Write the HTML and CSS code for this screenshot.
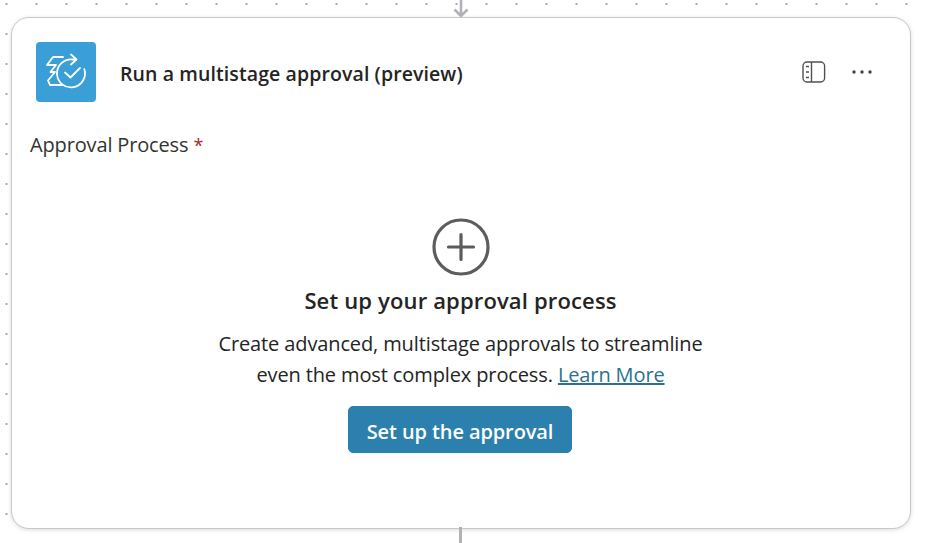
FILE: index.html
```html
<!DOCTYPE html>
<html lang="en">
<head>
<meta charset="utf-8">
<title>Run a multistage approval</title>
<link rel="stylesheet" href="styles.css">
</head>
<body>
<svg class="conn conn-top" width="20" height="18" viewBox="0 0 20 18"><path d="M10 0V15.5M3.5 9.5L10 16L16.5 9.5" fill="none" stroke="#b3b0b6" stroke-width="2.6"/></svg>
<main class="card">
  <header class="head">
    <div class="logo">
      <svg width="60" height="60" viewBox="0 0 60 60" fill="none" stroke="#fff" stroke-width="1.8" stroke-linecap="round" stroke-linejoin="round">
        <path d="M40 17.5H36.5A14 14 0 1 0 48.3 27"/>
        <path d="M29 30.5L34.5 35.5L44 26" />
        <path d="M35 12.5L40.5 17.5L35 22.5"/>
        <path d="M27 15H17L11 23H20L14.5 30H19L12 38.5L14 43H26"/>
      </svg>
    </div>
    <h1 class="title">Run a multistage approval (preview)</h1>
    <div class="tools">
      <svg class="ico-panel" width="24" height="22" viewBox="0 0 24 22" fill="none" stroke="#505050" stroke-width="1.4"><rect x="1" y="1" width="21.6" height="20" rx="4"/><path d="M9.5 1V21" /><path d="M4 5.5H7M4 11H7M4 16.5H7" stroke-width="1.5"/></svg>
      <svg class="ico-more" width="20" height="4" viewBox="0 0 20 4" fill="#424242"><circle cx="2" cy="2" r="1.7"/><circle cx="10" cy="2" r="1.7"/><circle cx="18" cy="2" r="1.7"/></svg>
    </div>
  </header>
  <div class="label">Approval Process <span class="req">*</span></div>
  <section class="empty">
    <svg class="ico-plus" width="58" height="58" viewBox="0 0 58 58" fill="none" stroke="#5c5c5c" stroke-width="3.2"><circle cx="29" cy="29" r="27"/><path d="M29 16.5V41.5M16.5 29H41.5" stroke-linecap="round"/></svg>
    <h2 class="empty-title">Set up your approval process</h2>
    <p class="empty-text">Create advanced, multistage approvals to streamline<br>even the most complex process. <a class="link" href="#">Learn More</a></p>
    <button class="btn" type="button">Set up the approval</button>
  </section>
</main>
<div class="conn conn-bottom"></div>
</body>
</html>
```
FILE: styles.css
```css
html, body { height: 100%; }
body {
  margin: 0;
  height: 543px;
  overflow: hidden;
  position: relative;
  background-color: #fff;
  background-image: radial-gradient(circle at center, #a8a8a8 0, #a8a8a8 .8px, transparent 1.1px);
  background-size: 30px 30px;
  background-position: -8.5px -11px;
  font-family: "Open Sans", "Noto Sans", sans-serif;
  color: #242424;
  padding: 17px 15px 0 11px;
  box-sizing: border-box;
}
.card {
  width: 900px;
  height: 512px;
  box-sizing: border-box;
  background: #fff;
  border: 1px solid #c8c8c8;
  border-radius: 18px;
  box-shadow: 0 1px 4px rgba(0,0,0,.14);
  padding: 24px 37px 0 18px;
}
.head { display: flex; align-items: center; padding-left: 6px; height: 60px; }
.logo { width: 59.5px; height: 60px; background: #3a9fd6; border-radius: 4px; flex: none; overflow: hidden; }
.logo svg { display: block; }
.title { margin: 3px 0 0 24.5px; font-size: 19.5px; font-weight: 600; flex: 1; letter-spacing: .1px; }
.tools { display: flex; align-items: center; gap: 26px; padding-right: 1.5px; }
.label { margin-top: 28px; font-size: 20px; line-height: 30px; color: #333; letter-spacing: -.15px; }
.req { color: #a4262c; font-size: 18px; }
.empty { display: flex; flex-direction: column; align-items: center; margin-top: 58px; margin-right: -18px; }
.ico-plus { display: block; }
.empty-title { margin: 8px 0 0; font-size: 22px; line-height: 32px; font-weight: 600; letter-spacing: .15px; color: #242424; }
.empty-text { margin: 12px 0 0; font-size: 20px; line-height: 31px; text-align: center; letter-spacing: -.12px; color: #242424; }
.link { color: #2a7191; text-decoration: underline; }
.btn {
  margin: 16px 1px 0 0;
  width: 224px;
  height: 47px;
  padding: 3px 0 0;
  border: 1px solid #2c80ad;
  border-radius: 5px;
  background: #2c80ad;
  color: #fff;
  font: 600 20px "Open Sans", "Noto Sans", sans-serif;
  letter-spacing: -.1px;
}
.conn { position: absolute; }
.conn-top { left: 450.5px; top: 0; }
.conn-bottom { left: 459px; top: 527px; width: 3px; height: 16px; background: #b3b0b6; }
```
